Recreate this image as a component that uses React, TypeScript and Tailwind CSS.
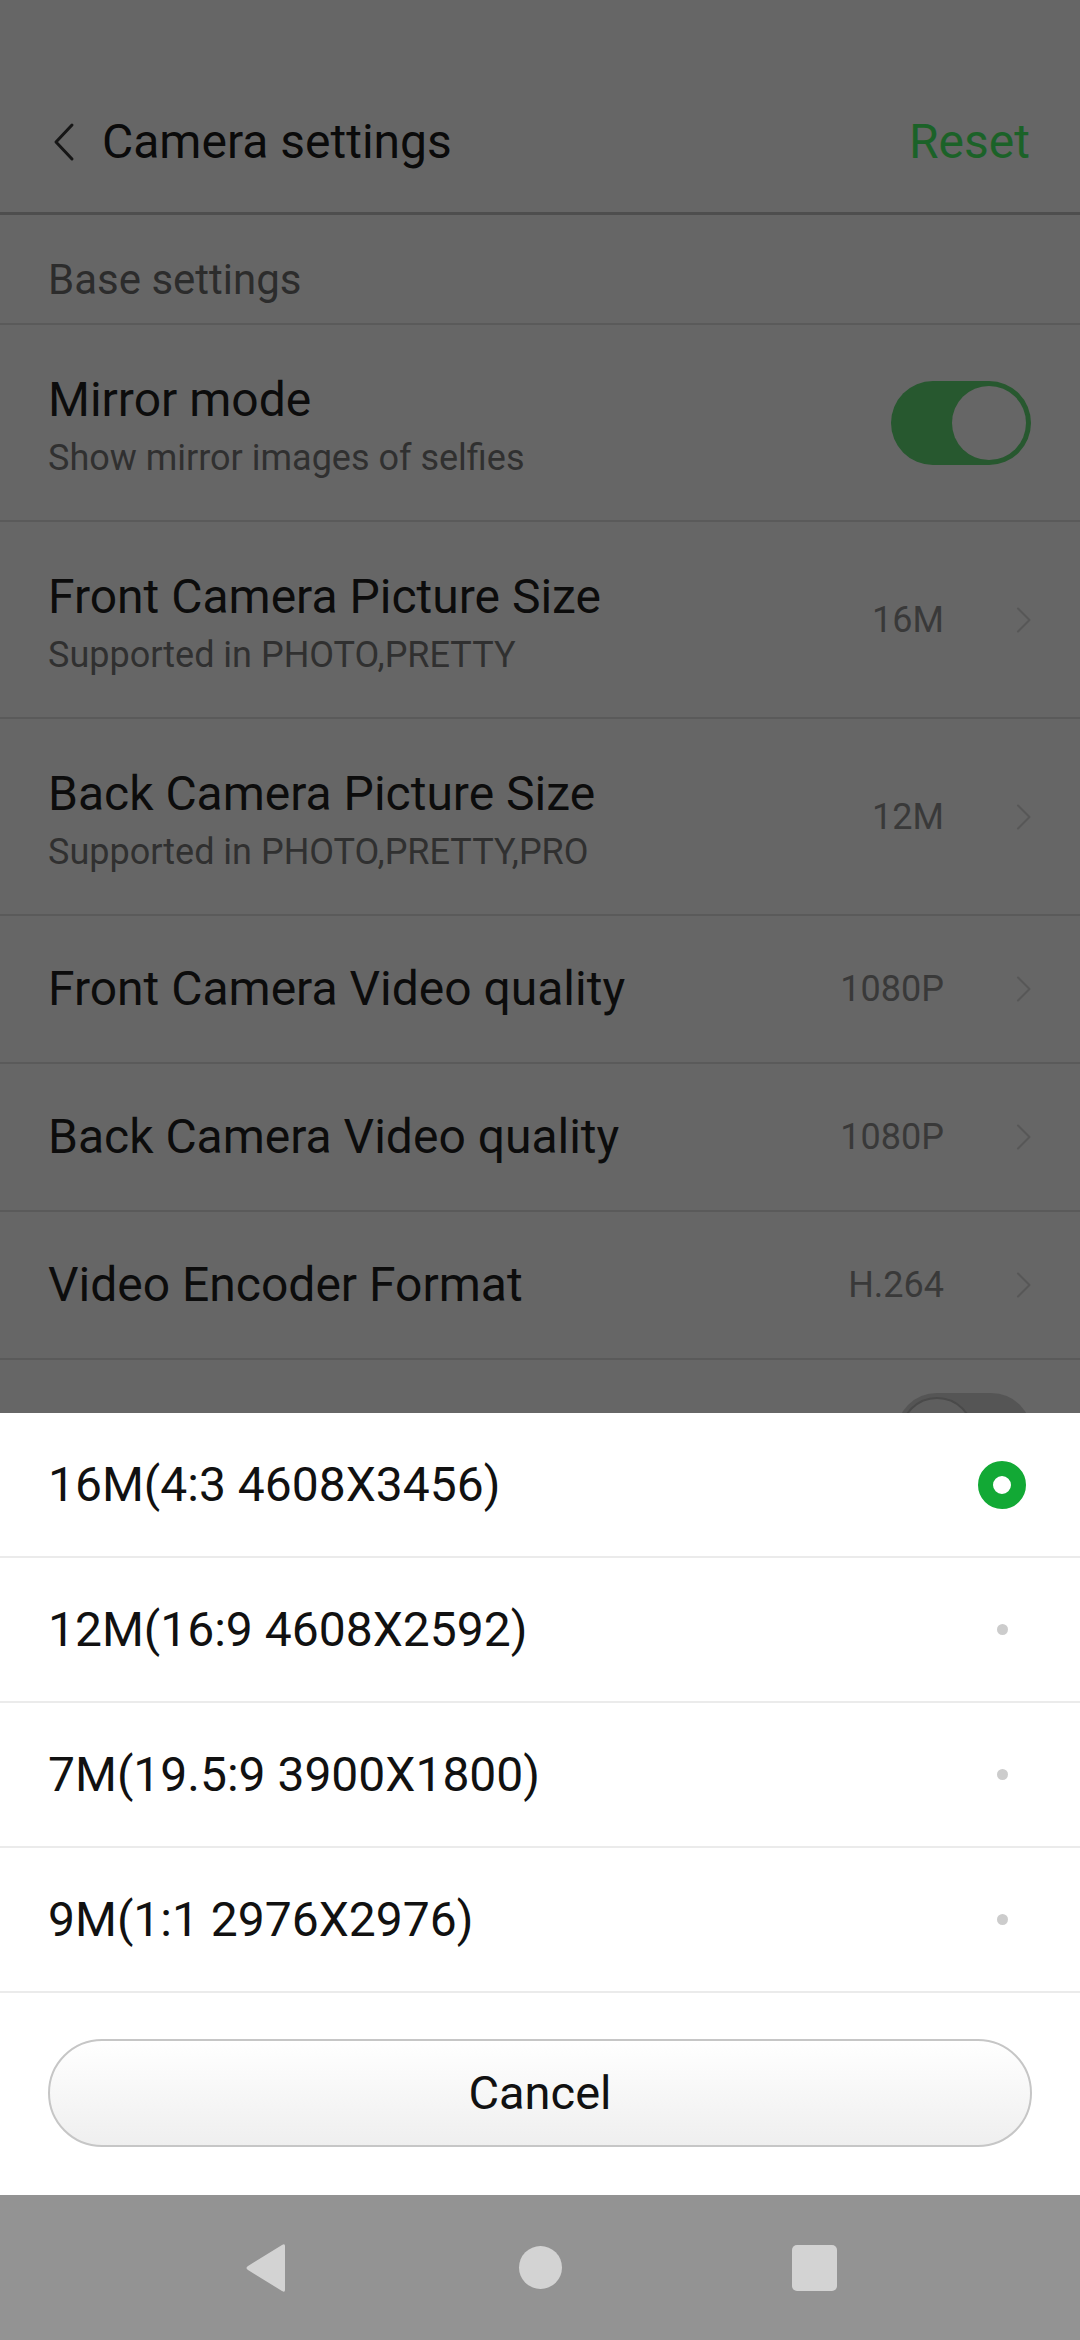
import { ReactElement } from "react"

type Row = { title: string; sub?: string; value?: string }

const pictureRows: Row[] = [
  { title: "Front Camera Picture Size", sub: "Supported in PHOTO,PRETTY", value: "16M" },
  { title: "Back Camera Picture Size", sub: "Supported in PHOTO,PRETTY,PRO", value: "12M" },
]

const videoRows: Row[] = [
  { title: "Front Camera Video quality", value: "1080P" },
  { title: "Back Camera Video quality", value: "1080P" },
  { title: "Video Encoder Format", value: "H.264" },
]

const sizes = ["16M(4:3 4608X3456)", "12M(16:9 4608X2592)", "7M(19.5:9 3900X1800)", "9M(1:1 2976X2976)"]

const Chevron = (): ReactElement => (
  <svg width="16" height="26" viewBox="0 0 16 26" fill="none" className="ml-[72px] shrink-0">
    <path d="M2 1.5 L13.5 13 L2 24.5" stroke="#575757" strokeWidth="2" strokeLinecap="round" strokeLinejoin="round" />
  </svg>
)

const SettingRow = ({ title, sub, value }: Row): ReactElement => (
  <div className={`flex items-center px-[48px] border-b-2 border-[#5a5a5a] ${sub ? "h-[197px]" : "h-[148px]"}`}>
    <div className={`flex flex-col flex-1 min-w-0 ${sub ? "pt-[5px]" : ""}`}>
      <span className="text-[48px] leading-[56px] text-[#0c0c0c]">{title}</span>
      {sub && <span className="text-[36px] leading-[42px] mt-[9px] text-[#303030]">{sub}</span>}
    </div>
    <span className="text-[36px] text-[#393939]">{value}</span>
    <Chevron />
  </div>
)

const App = (): ReactElement => {
  return (
    <div className="relative w-[1080px] h-[2340px] overflow-hidden bg-[#666666] font-['Roboto',sans-serif]">
      {/* header */}
      <header className="pt-[72px] h-[215px] flex items-center px-[52px] border-b-[3px] border-[#4e4e4e]">
        <div className="flex items-center w-full h-[140px]">
          <svg width="24" height="40" viewBox="0 0 24 40" fill="none">
            <path d="M20 3 L4 20 L20 37" stroke="#161616" strokeWidth="3" strokeLinecap="round" strokeLinejoin="round" />
          </svg>
          <h1 className="ml-[26px] text-[48px] text-[#0a0a0a] flex-1">Camera settings</h1>
          <span className="text-[48px] text-[#1b6228] mr-[-2px]">Reset</span>
        </div>
      </header>

      <div className="h-[110px] flex items-center pt-[20px] px-[48px] border-b-2 border-[#5a5a5a]">
        <span className="text-[42px] text-[#2c2c2c]">Base settings</span>
      </div>

      {/* mirror mode */}
      <div className="h-[197px] flex items-center px-[48px] border-b-2 border-[#5a5a5a]">
        <div className="flex flex-col flex-1 pt-[5px]">
          <span className="text-[48px] leading-[56px] text-[#0c0c0c]">Mirror mode</span>
          <span className="text-[36px] leading-[42px] mt-[9px] text-[#303030]">Show mirror images of selfies</span>
        </div>
        <div className="w-[140px] h-[84px] rounded-full bg-[#27582f] flex items-center justify-end pr-[5px] mr-[1px]">
          <div className="w-[74px] h-[74px] rounded-full bg-[#666666]" />
        </div>
      </div>

      {pictureRows.map((r) => (
        <SettingRow key={r.title} {...r} />
      ))}
      {videoRows.map((r) => (
        <SettingRow key={r.title} {...r} />
      ))}

      {/* next row, mostly hidden under the sheet */}
      <div className="h-[148px] flex items-center justify-end px-[48px]">
        <div className="w-[136px] h-[82px] rounded-full bg-[#555555] flex items-center pl-[4px]">
          <div className="w-[74px] h-[74px] rounded-full bg-[#5e5e5e] border-2 border-[#4a4a4a]" />
        </div>
      </div>

      {/* bottom sheet */}
      <div className="absolute left-0 right-0 bottom-0 flex flex-col">
        <div className="bg-white">
          {sizes.map((s, i) => (
            <div key={s} className="h-[145px] flex items-center pl-[48px] pr-[54px] border-b-2 border-[#ebebeb]">
              <span className="flex-1 text-[48px] text-[#111111]">{s}</span>
              <div className="w-[48px] h-[48px] flex items-center justify-center">
                {i === 0 ? (
                  <div className="w-[48px] h-[48px] rounded-full border-[15px] border-[#12a935] bg-white" />
                ) : (
                  <div className="w-[11px] h-[11px] rounded-full bg-[#cccccc]" />
                )}
              </div>
            </div>
          ))}
          <div className="px-[48px] pt-[46px] pb-[48px]">
            <button className="w-full h-[108px] rounded-full border-2 border-[#c6c6c6] bg-gradient-to-b from-white to-[#efefef] text-[47px] text-[#111111]">
              Cancel
            </button>
          </div>
        </div>
        <nav className="h-[145px] bg-[#939393] flex items-center justify-center gap-[230px]">
          <svg width="46" height="50" viewBox="0 0 46 50">
            <path d="M42 3 L42 47 Q42 50 39 48 L5 27 Q2 25 5 23 L39 2 Q42 0 42 3 Z" fill="#d3d3d3" />
          </svg>
          <div className="w-[43px] h-[43px] rounded-full bg-[#d3d3d3]" />
          <div className="w-[45px] h-[46px] rounded-[5px] bg-[#d3d3d3]" />
        </nav>
      </div>
    </div>
  )
}

export default App
